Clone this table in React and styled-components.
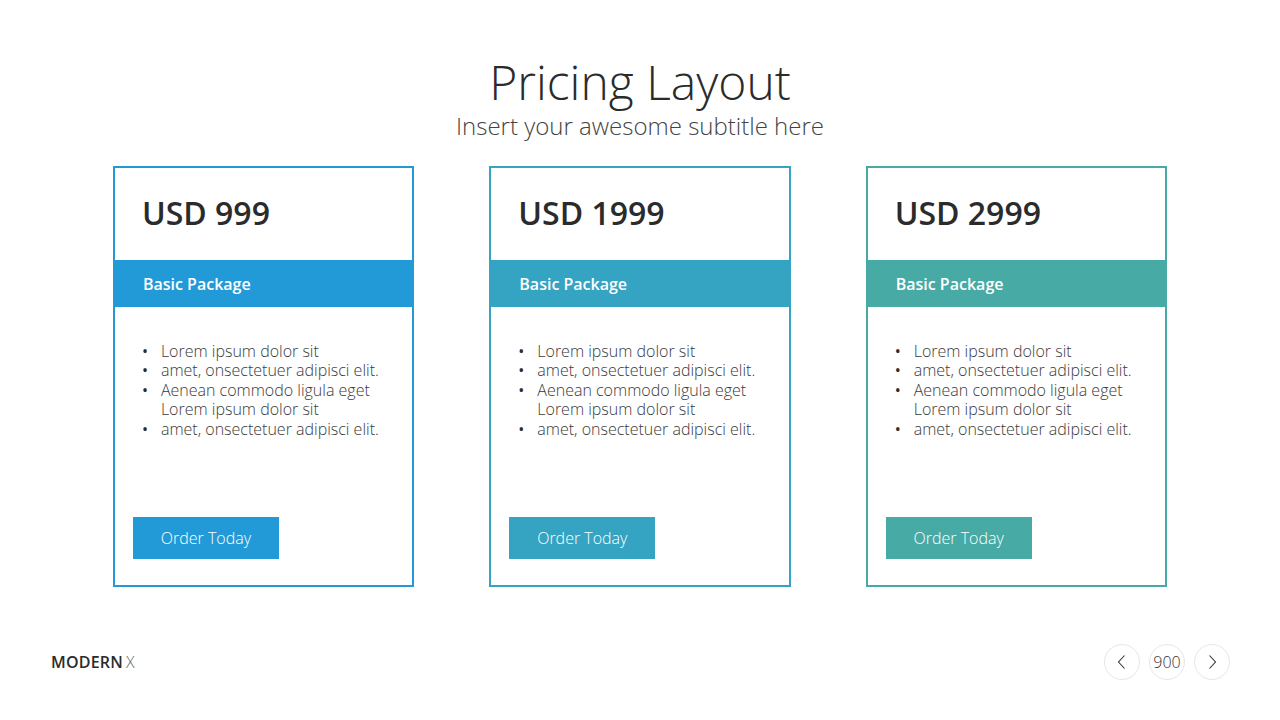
import React from 'react';
import styled, { createGlobalStyle } from 'styled-components';

const GlobalStyle = createGlobalStyle`
  html, body {
    margin: 0;
    padding: 0;
    background: #ffffff;
  }
  body {
    font-family: 'Open Sans', 'Noto Sans', sans-serif;
    color: #333333;
  }
`;

const Page = styled.div`
  width: 1280px;
  height: 720px;
  box-sizing: border-box;
  display: flex;
  flex-direction: column;
  align-items: center;
  padding-top: 54px;
`;

const Title = styled.h1`
  margin: 0;
  font-size: 48px;
  font-weight: 300;
  line-height: 56px;
  color: #2b2b2b;
`;

const Subtitle = styled.h2`
  margin: 0;
  font-size: 24px;
  font-weight: 300;
  line-height: 32px;
  color: #444444;
`;

const CardRow = styled.div`
  display: flex;
  gap: 75px;
  margin-top: 24px;
`;

const Card = styled.div`
  width: 301.4px;
  height: 421px;
  box-sizing: border-box;
  border: 2px solid ${p => p.$color};
  display: flex;
  flex-direction: column;
`;

const Price = styled.div`
  height: 92px;
  box-sizing: border-box;
  padding: 25px 0 0 27px;
  font-size: 32px;
  font-weight: 600;
  line-height: 40px;
  color: #2b2b2b;
`;

const Band = styled.div`
  height: 47px;
  background: ${p => p.$color};
  color: #ffffff;
  display: flex;
  align-items: center;
  padding-left: 28px;
  font-size: 16px;
  font-weight: 600;
`;

const Body = styled.div`
  flex: 1;
  display: flex;
  flex-direction: column;
  padding: 35px 0 26px 18px;
`;

const List = styled.ul`
  margin: 0;
  padding: 0 0 0 9px;
  list-style: none;
  font-size: 16px;
  font-weight: 300;
  line-height: 19.4px;
  color: #3a3a3a;
`;

const Item = styled.li`
  display: flex;
`;

const Dot = styled.span`
  flex: 0 0 19px;
  font-size: 16px;
  font-weight: 400;
  color: #2b2b2b;
`;

const Button = styled.button`
  margin-top: auto;
  width: 146px;
  height: 42px;
  border: none;
  background: ${p => p.$color};
  color: #ffffff;
  font-family: 'Open Sans', 'Noto Sans', sans-serif;
  font-size: 16px;
  font-weight: 300;
  cursor: pointer;
`;

const Footer = styled.div`
  width: 100%;
  box-sizing: border-box;
  margin-top: auto;
  margin-bottom: 40px;
  padding: 0 50px 0 51px;
  display: flex;
  justify-content: space-between;
  align-items: center;
`;

const Brand = styled.div`
  font-size: 16px;
  color: #2b2b2b;
  letter-spacing: 0.2px;
  b {
    font-weight: 600;
  }
  span {
    font-weight: 300;
    color: #666666;
    margin-left: 3px;
  }
`;

const Nav = styled.div`
  display: flex;
  gap: 9px;
`;

const Circle = styled.div`
  width: 36px;
  height: 36px;
  box-sizing: border-box;
  border-radius: 50%;
  border: 1px solid #e6e6e6;
  display: flex;
  align-items: center;
  justify-content: center;
  font-size: 16px;
  font-weight: 300;
  color: #333333;
`;

const Chevron = ({ dir }) => (
  <svg width="16" height="16" viewBox="0 0 16 16" fill="none" stroke="#333" strokeWidth="1.1">
    {dir === 'left' ? <path d="M10.5 1.5 L4.5 8 L10.5 14.5" /> : <path d="M5.5 1.5 L11.5 8 L5.5 14.5" />}
  </svg>
);

const plans = [
  { price: 'USD 999', color: '#229ad8' },
  { price: 'USD 1999', color: '#35a3c2' },
  { price: 'USD 2999', color: '#47aaa5' },
];

const features = [
  'Lorem ipsum dolor sit',
  'amet, onsectetuer adipisci elit.',
  'Aenean commodo ligula eget Lorem ipsum dolor sit',
  'amet, onsectetuer adipisci elit.',
];

const App = () => {
  return (
    <Page>
      <GlobalStyle />
      <Title>Pricing Layout</Title>
      <Subtitle>Insert your awesome subtitle here</Subtitle>
      <CardRow>
        {plans.map(plan => (
          <Card key={plan.price} $color={plan.color}>
            <Price>{plan.price}</Price>
            <Band $color={plan.color}>Basic Package</Band>
            <Body>
              <List>
                {features.map((f, i) => (
                  <Item key={i}>
                    <Dot>•</Dot>
                    <span>{f}</span>
                  </Item>
                ))}
              </List>
              <Button $color={plan.color}>Order Today</Button>
            </Body>
          </Card>
        ))}
      </CardRow>
      <Footer>
        <Brand>
          <b>MODERN</b>
          <span>X</span>
        </Brand>
        <Nav>
          <Circle>
            <Chevron dir="left" />
          </Circle>
          <Circle>900</Circle>
          <Circle>
            <Chevron dir="right" />
          </Circle>
        </Nav>
      </Footer>
    </Page>
  );
};

export default App;
